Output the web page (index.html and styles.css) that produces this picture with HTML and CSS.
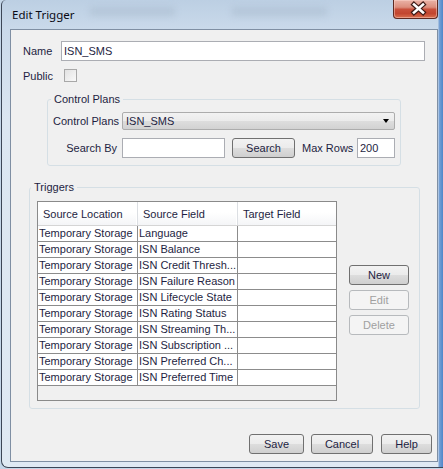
FILE: index.html
```html
<!DOCTYPE html>
<html>
<head>
<meta charset="utf-8">
<title>Edit Trigger</title>
<link rel="stylesheet" href="styles.css">
</head>
<body>
<div class="window">
  <div class="titlebar">
    <span class="blob blob1"></span>
    <span class="blob blob2"></span>
    <div class="title">Edit Trigger</div>
    <div class="close">
      <svg width="45" height="19" viewBox="0 0 45 19">
        <path d="M21 5.5 L30 13.5 M30 5.5 L21 13.5" stroke="#3d1a16" stroke-width="5" stroke-linecap="square"/>
        <path d="M21 5.5 L30 13.5 M30 5.5 L21 13.5" stroke="#ffffff" stroke-width="2.6" stroke-linecap="square"/>
      </svg>
    </div>
  </div>
  <div class="client">
    <div class="row name-row">
      <span class="lbl name-lbl">Name</span>
      <div class="input name-input">ISN_SMS</div>
    </div>
    <div class="row public-row">
      <span class="lbl public-lbl">Public</span>
      <span class="checkbox"></span>
    </div>
    <fieldset class="group cp">
      <legend class="cp-legend">Control Plans</legend>
      <div class="row cp-row1">
        <span class="lbl2">Control Plans</span>
        <div class="combo"><span class="combo-text">ISN_SMS</span><span class="arrow"></span></div>
      </div>
      <div class="row cp-row2">
        <span class="lbl2">Search By</span>
        <div class="input search-input"></div>
        <button class="btn search-btn">Search</button>
        <span class="maxlbl">Max Rows</span>
        <div class="input max-input">200</div>
      </div>
    </fieldset>
    <fieldset class="group trig">
      <legend class="trig-legend">Triggers</legend>
      <div class="trig-body">
        <div class="table">
          <div class="thead">
            <div class="th">Source Location</div>
            <div class="th">Source Field</div>
            <div class="th">Target Field</div>
          </div>
          <div class="tr"><div class="td">Temporary Storage</div><div class="td">Language</div><div class="td last"></div></div>
          <div class="tr"><div class="td">Temporary Storage</div><div class="td">ISN Balance</div><div class="td last"></div></div>
          <div class="tr"><div class="td">Temporary Storage</div><div class="td">ISN Credit Thresh...</div><div class="td last"></div></div>
          <div class="tr"><div class="td">Temporary Storage</div><div class="td">ISN Failure Reason</div><div class="td last"></div></div>
          <div class="tr"><div class="td">Temporary Storage</div><div class="td">ISN Lifecycle State</div><div class="td last"></div></div>
          <div class="tr"><div class="td">Temporary Storage</div><div class="td">ISN Rating Status</div><div class="td last"></div></div>
          <div class="tr"><div class="td">Temporary Storage</div><div class="td">ISN Streaming Th...</div><div class="td last"></div></div>
          <div class="tr"><div class="td">Temporary Storage</div><div class="td">ISN Subscription ...</div><div class="td last"></div></div>
          <div class="tr"><div class="td">Temporary Storage</div><div class="td">ISN Preferred Ch...</div><div class="td last"></div></div>
          <div class="tr"><div class="td">Temporary Storage</div><div class="td">ISN Preferred Time</div><div class="td last"></div></div>
        </div>
        <div class="side">
          <button class="btn side-btn">New</button>
          <button class="btn side-btn disabled">Edit</button>
          <button class="btn side-btn disabled">Delete</button>
        </div>
      </div>
    </fieldset>
    <div class="footer">
      <button class="btn save-btn">Save</button>
      <button class="btn cancel-btn">Cancel</button>
      <button class="btn help-btn">Help</button>
    </div>
  </div>
</div>
</body>
</html>
```
FILE: styles.css
```css
* { box-sizing: border-box; }
html, body { margin: 0; padding: 0; }
body {
  width: 443px;
  height: 469px;
  overflow: hidden;
  background: #c4d6e8;
  font-family: "Liberation Sans", Arial, sans-serif;
  font-size: 11px;
  color: #1e1e42;
}
.window {
  position: relative;
  width: 442px;
  height: 468px;
  margin-left: 1px;
  border-left: 1px solid #3c4656;
  border-bottom: 1px solid #3c4656;
  border-radius: 5px 0 0 7px;
  background:
    linear-gradient(to right, rgba(0,0,0,0) 436px, #7aa3d6 437px, #4f86c9 100%),
    linear-gradient(#bccfe3, #c9d9ea 28px, #dbe6f1 120px, #dfe9f3 100%);
  overflow: hidden;
}
.titlebar {
  position: relative;
  height: 29px;
  display: flex;
  align-items: flex-start;
}
.blob {
  position: absolute;
  top: 7px;
  height: 9px;
  background: #9fb1c4;
  filter: blur(3px);
  opacity: 0.35;
}
.blob1 { left: 88px; width: 85px; }
.blob2 { left: 230px; width: 95px; }
.title {
  position: relative;
  padding: 8px 0 0 10px;
  font-family: "Noto Sans", "Open Sans", sans-serif;
  font-size: 11.5px;
  line-height: 14px;
  color: #0a0a14;
}
.close {
  margin-left: auto;
  margin-right: 5px;
  width: 45px;
  height: 19px;
  border: 1px solid #5e2a22;
  border-top: none;
  border-radius: 0 0 4px 4px;
  background: linear-gradient(#eab3a7 0%, #dc8e7d 40%, #c8503b 52%, #c24630 75%, #d9704f 100%);
  box-shadow: inset 0 0 0 1px rgba(255,220,210,0.45);
}
.close svg { display: block; margin: -1px 0 0 -1px; }
.client {
  margin-left: 8px;
  width: 428px;
  height: 433px;
  border: 1px solid #7f8fa3;
  background: #f0f0f0;
  display: flex;
  flex-direction: column;
}
.row { display: flex; align-items: center; }
.lbl { padding-left: 12px; }
.name-row { margin-top: 11px; height: 20px; }
.name-lbl { width: 50px; }
.input {
  height: 20px;
  border: 1px solid #abadb3;
  background: #ffffff;
  padding-left: 2px;
  line-height: 18px;
  white-space: nowrap;
  overflow: hidden;
}
.name-input { width: 364px; }
.public-row { margin-top: 8px; height: 13px; }
.public-lbl { width: 53px; }
.checkbox {
  width: 13px;
  height: 13px;
  border: 1px solid #a8a8a8;
  background: linear-gradient(135deg, #e2e2e2, #f9f9f9);
}
.group {
  margin: 0;
  min-width: 0;
  border: 1px solid #d5dfe5;
  border-radius: 3px;
}
.group legend {
  padding: 0 3px;
  line-height: 13px;
  color: #1e1e42;
}
.cp {
  margin: 11px 0 0 36px;
  width: 354px;
  padding: 6px 5px 7px 5px;
}
.cp-legend { margin-left: -2px; }
.lbl2 { width: 64px; text-align: right; white-space: nowrap; }
.cp-row1 { height: 18px; }
.combo {
  margin-left: 5px;
  width: 273px;
  height: 18px;
  border: 1px solid #acacac;
  border-radius: 2px;
  background: linear-gradient(#f2f2f2 0%, #ebebeb 50%, #dddddd 51%, #d2d2d2 100%);
  display: flex;
  align-items: center;
}
.combo-text { padding-left: 3px; }
.arrow {
  margin-left: auto;
  margin-right: 5px;
  width: 0;
  height: 0;
  border-left: 3px solid transparent;
  border-right: 3px solid transparent;
  border-top: 4px solid #000;
}
.cp-row2 { margin-top: 8px; height: 20px; }
.search-input { margin-left: 5px; width: 103px; }
.btn {
  height: 20px;
  padding: 0;
  border: 1px solid #707070;
  border-radius: 3px;
  background: linear-gradient(#f2f2f2 0%, #ebebeb 50%, #dddddd 51%, #cfcfcf 100%);
  font-family: inherit;
  font-size: 11px;
  color: #1e1e42;
  line-height: 18px;
}
.search-btn { margin-left: 7px; width: 63px; }
.maxlbl { margin-left: 7px; white-space: nowrap; }
.max-input { margin-left: auto; width: 38px; }
.trig {
  margin: 15px 0 0 18px;
  width: 391px;
  padding: 7px 10px 7px 7px;
}
.trig-legend { margin-left: -6px; }
.trig-body { display: flex; align-items: flex-start; }
.table {
  width: 300px;
  height: 200px;
  border: 1px solid #8a8a8a;
  background: #f0f0f0;
  display: flex;
  flex-direction: column;
}
.thead {
  display: grid;
  grid-template-columns: 100px 100px 98px;
  height: 24px;
  flex: none;
  background: linear-gradient(#ffffff 0%, #ffffff 45%, #f4f5f7 100%);
  border-bottom: 1px solid #d5d5d5;
}
.th {
  padding: 2px 0 0 5px;
  line-height: 20px;
  border-right: 1px solid #dcdfe3;
  box-shadow: inset -1px 0 0 #ffffff;
  white-space: nowrap;
}
.th:last-child { border-right: none; box-shadow: none; }
.tr {
  display: grid;
  grid-template-columns: 100px 100px 98px;
  height: 16px;
  flex: none;
  background: #ffffff;
  border-bottom: 1px solid #8c8c8c;
}
.td {
  padding-left: 1px;
  line-height: 15px;
  border-right: 1px solid #8c8c8c;
  white-space: nowrap;
  overflow: hidden;
}
.td.last { border-right: none; }
.side {
  margin: 64px 0 0 12px;
  display: flex;
  flex-direction: column;
  gap: 5px;
}
.side-btn { width: 60px; }
.btn.disabled {
  border-color: #b7babd;
  background: #f4f4f4;
  color: #a0a0a0;
}
.footer {
  margin-top: 25px;
  display: flex;
  justify-content: flex-end;
  padding-right: 5px;
}
.save-btn { width: 55px; }
.cancel-btn { width: 62px; margin-left: 7px; }
.help-btn { width: 51px; margin-left: 8px; }
```
